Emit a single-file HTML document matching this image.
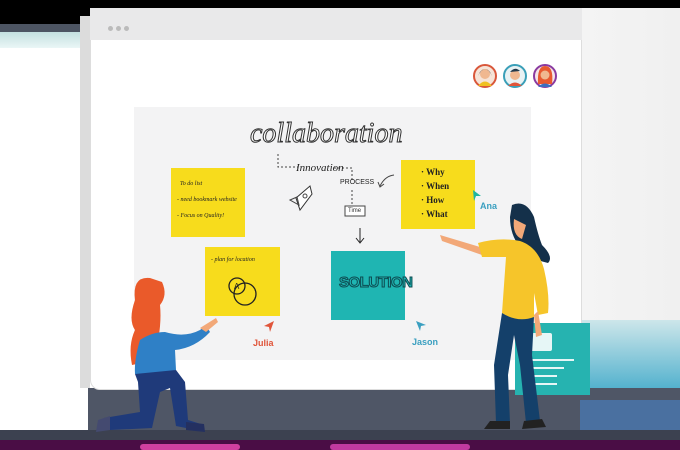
<!DOCTYPE html>
<html><head><meta charset="utf-8"><style>
*{margin:0;padding:0;box-sizing:border-box}
body{width:680px;height:450px;overflow:hidden;background:#fff;position:relative;font-family:"Liberation Sans",sans-serif}
.a{position:absolute}
.note{position:absolute;background:#f7dc1c;font-family:"Liberation Serif",serif;font-style:italic;color:#222}
</style></head><body>
<!-- top black -->
<div class="a" style="left:0;top:0;width:680px;height:8px;background:#000"></div>
<div class="a" style="left:0;top:0;width:95px;height:24px;background:#000"></div>
<div class="a" style="left:0;top:24px;width:85px;height:8px;background:#4d5563"></div>
<div class="a" style="left:0;top:32px;width:85px;height:16px;background:linear-gradient(#c4e0e0,#eaf6f6)"></div>
<!-- right side -->
<div class="a" style="left:580px;top:8px;width:100px;height:315px;background:linear-gradient(90deg,#f4f4f4,#f0f0f0)"></div>
<div class="a" style="left:580px;top:320px;width:100px;height:80px;background:linear-gradient(#cde6ea,#3fa9c9)"></div>
<!-- bottom bands -->
<div class="a" style="left:88px;top:388px;width:592px;height:44px;background:#4f5666"></div>
<div class="a" style="left:580px;top:400px;width:100px;height:32px;background:#4a70a0"></div>
<div class="a" style="left:0;top:392px;width:88px;height:40px;background:#fff"></div>
<div class="a" style="left:0;top:430px;width:680px;height:10px;background:#3c4150"></div>
<div class="a" style="left:0;top:440px;width:680px;height:10px;background:#4a0d45"></div>
<div class="a" style="left:140px;top:444px;width:100px;height:6px;background:#d040a0;border-radius:3px"></div>
<div class="a" style="left:330px;top:444px;width:140px;height:6px;background:#c03aa0;border-radius:3px"></div>
<!-- window -->
<div class="a" style="left:80px;top:16px;width:10px;height:372px;background:#dcdcdc"></div>
<div class="a" style="left:90px;top:8px;width:492px;height:382px;background:#fff;border-radius:0 0 10px 10px;border:1px solid #ddd"></div>
<div class="a" style="left:90px;top:8px;width:492px;height:32px;background:#e9e9ea"></div>
<div class="a" style="left:108px;top:26px;width:5px;height:5px;border-radius:50%;background:#bbb;box-shadow:8px 0 #bbb,16px 0 #bbb"></div>
<!-- avatars -->
<svg class="a" style="left:470px;top:62px" width="90" height="30">
<g><circle cx="15" cy="14" r="11" fill="#f6e3d6" stroke="#d9573a" stroke-width="2"/><circle cx="15" cy="12" r="5" fill="#f0b890"/><path d="M8 14 Q15 0 22 14 L20 10 Q15 4 10 10Z" fill="#2a2a30"/><path d="M8 24 Q15 15 22 24Z" fill="#f0c020"/></g>
<g><circle cx="45" cy="14" r="11" fill="#e8f2f4" stroke="#3a9fb8" stroke-width="2"/><circle cx="45" cy="13" r="5" fill="#f0b890"/><path d="M40 10 Q45 4 50 9Z" fill="#243a4c"/><path d="M38 24 Q45 17 52 24Z" fill="#e0553a"/></g>
<g><circle cx="75" cy="14" r="11" fill="#f4e4e8" stroke="#8a3aa0" stroke-width="2"/><path d="M68 22 Q67 4 75 4 Q84 4 82 22Z" fill="#e85a30"/><circle cx="75" cy="13" r="4.5" fill="#f0b890"/><path d="M68 25 Q75 18 82 25Z" fill="#3a70c0"/></g>
</svg>
<!-- board -->
<div class="a" style="left:134px;top:107px;width:397px;height:253px;background:#f3f3f4"></div>
<div class="a" style="left:250px;top:118px;font-family:'Liberation Serif',serif;font-style:italic;font-size:28px;color:#fff;-webkit-text-stroke:1px #333;letter-spacing:0px">collaboration</div>
<svg class="a" style="left:270px;top:150px" width="140" height="100" fill="none" stroke="#444" stroke-width="1">
<path d="M8 4V17H28" stroke-dasharray="2 2"/><path d="M64 18H82V30" stroke-dasharray="2 2"/><path d="M82 40V56" stroke-dasharray="2 2"/>
<rect x="75" y="56" width="20" height="10" fill="#fff"/><path d="M90 78V92M86 88L90 93 94 88" stroke="#222"/>
<path d="M110 36Q115 26 124 25"/><path d="M108 32L110 37 114 34"/>
<path d="M26 48L40 36 42 44 30 60Z" fill="#fff" stroke="#333"/><circle cx="35" cy="46" r="2"/><path d="M20 50L27 47 29 55Z"/>
</svg>
<div class="a" style="left:296px;top:162px;font-family:'Liberation Serif',serif;font-style:italic;font-size:11px;color:#222">Innovation</div>
<div class="a" style="left:340px;top:179px;font-size:7px;color:#222">PROCESS</div>
<div class="a" style="left:348px;top:208px;font-size:6px;color:#333">Time</div>
<div class="note" style="left:171px;top:168px;width:74px;height:69px;font-size:6px;padding:8px 6px;line-height:16px">&nbsp;&nbsp;To do list<br>- need bookmark website<br>- Focus on Quality!</div>
<div class="note" style="left:205px;top:247px;width:75px;height:69px;font-size:6px;padding:10px 6px">- plan for location</div>
<svg class="a" style="left:224px;top:272px" width="40" height="40" fill="none" stroke="#222" stroke-width="1.3"><circle cx="13" cy="14" r="8"/><circle cx="21" cy="22" r="11"/><text x="10" y="17" font-size="8" fill="#222" stroke="none">A</text></svg>
<div class="note" style="left:401px;top:160px;width:74px;height:69px;font-size:9px;padding:5px 0 0 20px;line-height:14px;font-style:normal;font-weight:bold">· Why<br>· When<br>· How<br>· What</div>
<div class="a" style="left:331px;top:251px;width:74px;height:69px;background:#1fb5b2"></div>
<div class="a" style="left:339px;top:274px;font-size:15px;font-weight:bold;color:#1fb5b2;-webkit-text-stroke:1px #0d4a50;letter-spacing:-0.5px">SOLUTION</div>
<!-- labels -->
<svg class="a" style="left:262px;top:320px" width="14" height="14"><path d="M2 6L12 1 8 12 7 7Z" fill="#e0553a"/></svg>
<div class="a" style="left:253px;top:338px;font-size:9px;font-weight:bold;color:#e0553a">Julia</div>
<svg class="a" style="left:414px;top:319px" width="14" height="14"><path d="M2 2L12 6 7 7 6 12Z" fill="#3a9fc0"/></svg>
<div class="a" style="left:412px;top:337px;font-size:9px;font-weight:bold;color:#3a9fc0">Jason</div>
<svg class="a" style="left:472px;top:189px" width="10" height="14"><path d="M1 1L9 7 4 7 2 12Z" fill="#1fb5a0"/></svg>
<div class="a" style="left:480px;top:201px;font-size:9px;font-weight:bold;color:#3a9fc0">Ana</div>
<!-- teal card -->
<div class="a" style="left:515px;top:323px;width:75px;height:72px;background:#26b3b0"></div>
<div class="a" style="left:530px;top:333px;width:22px;height:18px;background:#e6f6f6;border-radius:2px"></div>
<div class="a" style="left:532px;top:359px;width:42px;height:2px;background:#e6f6f6;box-shadow:-10px 8px 0 -0px #e6f6f6"></div>
<div class="a" style="left:525px;top:375px;width:32px;height:2px;background:#e6f6f6;box-shadow:0 8px #e6f6f6"></div>
<!-- Julia figure -->
<svg class="a" style="left:90px;top:270px" width="160" height="170">
<path d="M60 8Q42 6 45 30Q38 50 45 60Q38 75 42 95Q60 92 66 80Q72 55 70 35Q78 25 72 12Z" fill="#ea5a2a"/>
<path d="M50 70Q62 62 75 62Q95 68 110 60L116 55L120 62Q105 78 85 80L86 100Q70 106 45 104Q44 90 50 70Z" fill="#2f80c6"/>
<path d="M110 58L126 48 128 52 116 62Z" fill="#f2a878"/>
<path d="M45 104L86 100 95 112 98 150 114 155 106 160 86 156 80 118 70 122 62 158 20 160 10 158 14 148 50 142 48 112Z" fill="#1f3a7a"/>
<path d="M8 150L20 146 20 160 6 162Z" fill="#444a70"/><path d="M96 152 114 154 115 162 96 160Z" fill="#243060"/>
</svg>
<!-- Ana figure -->
<svg class="a" style="left:430px;top:195px" width="140" height="240">
<path d="M82 10Q96 4 104 22Q108 40 112 50Q124 62 118 68Q100 64 90 52Q80 40 80 22Z" fill="#14304a"/>
<path d="M84 24Q82 40 92 44L96 30Z" fill="#f2a878"/>
<path d="M10 40L50 52 52 60 12 46Z" fill="#f2a878"/>
<path d="M48 48Q70 42 90 46Q108 52 114 74Q120 100 118 118L108 120 104 98 104 122Q90 130 72 118L76 62 52 62Z" fill="#f6c52a"/>
<path d="M108 116L112 140 106 142 104 120Z" fill="#f2a878"/>
<path d="M72 118Q88 128 104 122L102 160 110 226 96 228 90 170 84 140 78 180 80 228 66 228 64 170Z" fill="#14406a"/>
<path d="M60 226L80 226 80 234 54 234Z" fill="#222"/><path d="M94 226 112 224 116 232 92 234Z" fill="#222"/>
</svg>
</body></html>
